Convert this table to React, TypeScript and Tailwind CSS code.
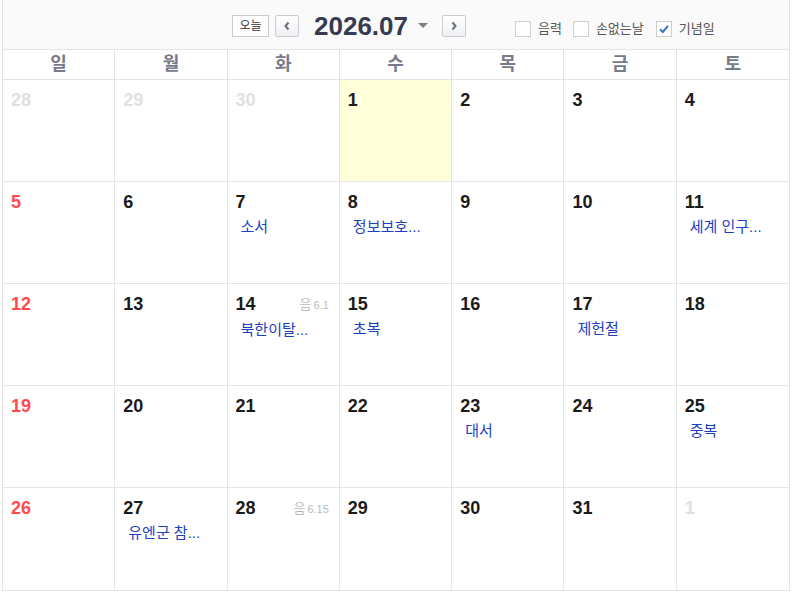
import React from 'react';

type Day = {
  n: number;
  muted?: boolean;
  sun?: boolean;
  today?: boolean;
  lunar?: string;
  event?: string;
};

const weekdays = ['일', '월', '화', '수', '목', '금', '토'];

const events: Record<number, string> = {
  7: '소서',
  8: '정보보호...',
  11: '세계 인구...',
  14: '북한이탈...',
  15: '초복',
  17: '제헌절',
  23: '대서',
  25: '중복',
  27: '유엔군 참...',
};

const lunar: Record<number, string> = { 14: '6.1', 28: '6.15' };

const buildDays = (): Day[] => {
  const days: Day[] = [28, 29, 30].map((n) => ({ n, muted: true }));
  for (let n = 1; n <= 31; n++) {
    days.push({
      n,
      sun: (n + 3) % 7 === 1,
      today: n === 1,
      event: events[n],
      lunar: lunar[n],
    });
  }
  days.push({ n: 1, muted: true });
  return days;
};

const Checkbox = ({ label, checked }: { label: string; checked?: boolean }) => (
  <label className="flex items-center gap-[7px] text-[13px] text-[#555]">
    <span className="flex h-[16px] w-[16px] items-center justify-center border border-[#cfcfcf] bg-white">
      {checked && (
        <svg width="12" height="12" viewBox="0 0 12 12">
          <path d="M2 6.2 L4.8 9 L10 2.8" fill="none" stroke="#3a78c8" strokeWidth="2" />
        </svg>
      )}
    </span>
    {label}
  </label>
);

const NavButton = ({ dir }: { dir: 'l' | 'r' }) => (
  <button className="flex h-[22px] w-[24px] items-center justify-center rounded-[2px] border border-[#c9ccd3] bg-gradient-to-b from-white to-[#eef0f3]">
    <svg width="8" height="10" viewBox="0 0 8 10">
      <path
        d={dir === 'l' ? 'M5.5 1.5 L2.5 5 L5.5 8.5' : 'M2.5 1.5 L5.5 5 L2.5 8.5'}
        fill="none"
        stroke="#6b6f7a"
        strokeWidth="2"
      />
    </svg>
  </button>
);

export default function App() {
  const days = buildDays();

  return (
    <div
      className="h-[595px] w-[793px] bg-white pl-[2px]"
      style={{ fontFamily: '"Liberation Sans", "Noto Sans CJK KR", sans-serif' }}
    >
      <div className="w-[788px] border-x border-b border-[#e3e3e3]">
        <div className="relative flex h-[50px] items-center border-b border-[#e3e3e3] bg-[#fafafa]">
          <div className="ml-[229px] mt-[2px] flex items-center">
            <button className="h-[22px] w-[37px] border border-[#c9ccd3] bg-white text-[12px] leading-none text-[#333]">
              오늘
            </button>
            <div className="ml-[6px]">
              <NavButton dir="l" />
            </div>
            <div className="ml-[15px] flex items-center">
              <span className="text-[26px] font-bold leading-none text-[#363a52]">2026.07</span>
              <svg className="ml-[10px]" width="10" height="6" viewBox="0 0 10 6">
                <path d="M0 0 H10 L5 5 Z" fill="#7c7f8c" />
              </svg>
            </div>
            <div className="ml-[14px]">
              <NavButton dir="r" />
            </div>
          </div>
          <div className="ml-[49px] mt-[8px] flex items-center">
            <Checkbox label="음력" />
            <div className="ml-[11px]">
              <Checkbox label="손없는날" />
            </div>
            <div className="ml-[12px]">
              <Checkbox label="기념일" checked />
            </div>
          </div>
        </div>

        <div className="grid h-[30px] grid-cols-7 border-b border-[#e3e3e3]">
          {weekdays.map((w, i) => (
            <div
              key={w}
              className={`flex items-center justify-center text-[18px] font-bold text-[#777a8a] ${
                i < 6 ? 'border-r border-[#e3e3e3]' : ''
              }`}
            >
              {w}
            </div>
          ))}
        </div>

        <div className="grid h-[510px] grid-cols-7 grid-rows-5">
          {days.map((d, i) => {
            const col = i % 7;
            const row = Math.floor(i / 7);
            const numColor = d.muted ? 'text-[#e0e0e0]' : d.sun ? 'text-[#ff4b4b]' : 'text-[#1b1b1b]';
            return (
              <div
                key={i}
                className={`relative px-[8px] pt-[10px] ${col < 6 ? 'border-r border-[#e6e6e6]' : ''} ${
                  row < 4 ? 'border-b border-[#e6e6e6]' : ''
                } ${d.today ? 'bg-[#ffffd9] border-[#e6e6c0]' : ''}`}
              >
                <div className="flex items-start justify-between">
                  <span className={`text-[18px] font-bold leading-[20px] ${numColor}`}>{d.n}</span>
                  {d.lunar && (
                    <span className="mr-[2px] mt-[1px] flex items-baseline gap-[2px] font-normal text-[#bbbbbb]">
                      <span className="text-[13px]">음</span>
                      <span className="text-[11px]">{d.lunar}</span>
                    </span>
                  )}
                </div>
                {d.event && (
                  <div className="mt-[6px] pl-[5px] text-[15px] leading-[18px] text-[#1c3fc4]">{d.event}</div>
                )}
              </div>
            );
          })}
        </div>
      </div>
    </div>
  );
}
